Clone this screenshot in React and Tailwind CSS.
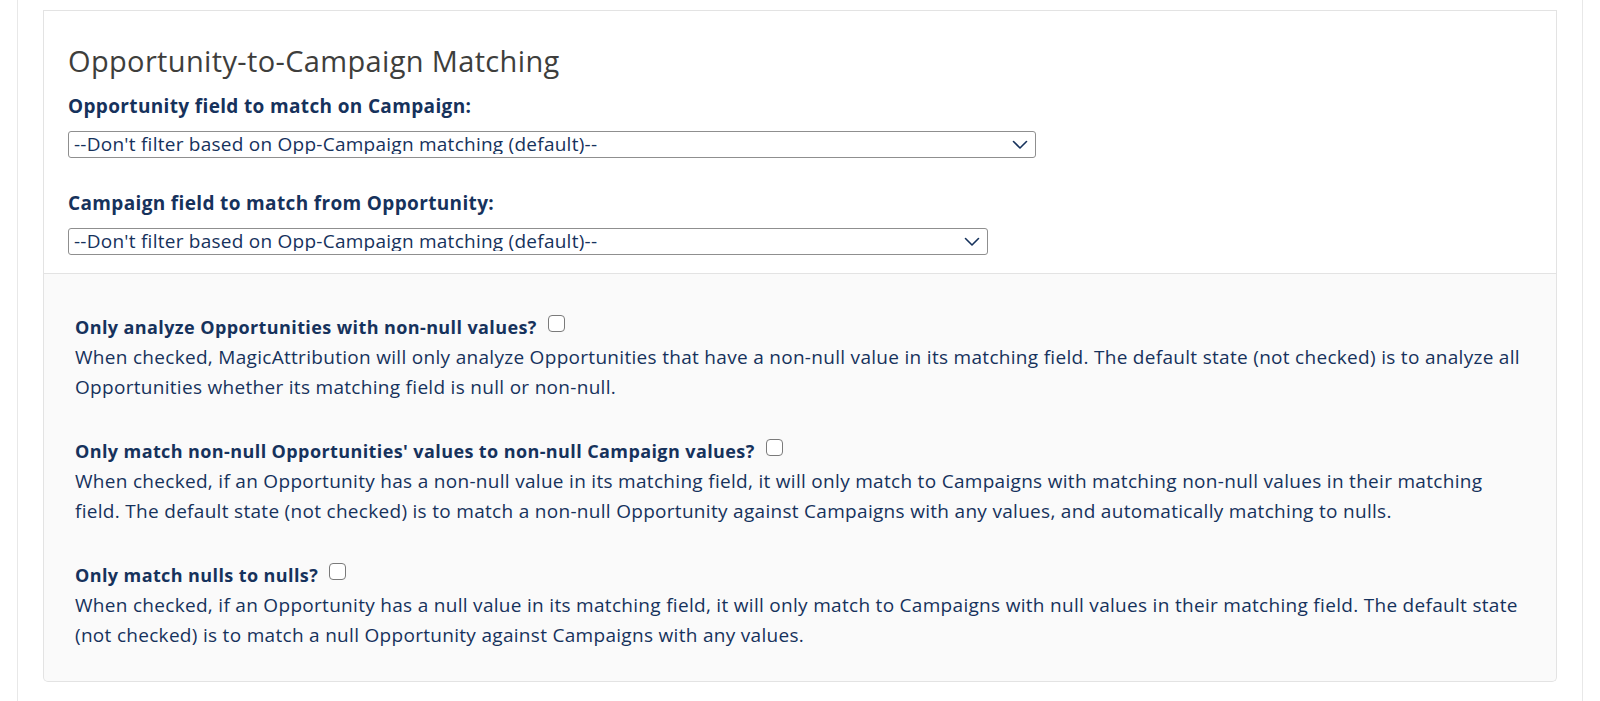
const NAVY = "text-[#16325c]";

function Select({ width }) {
  return (
    <div className={`relative ${width} h-[27px]`}>
      <select className="appearance-none w-full h-full border border-[#8f8f8f] rounded-[3px] bg-white pl-[5px] pr-8 text-[19px] tracking-[0.25px] text-[#16325c] leading-none outline-none">
        <option>--Don't filter based on Opp-Campaign matching (default)--</option>
      </select>
      <svg width="16" height="10" viewBox="0 0 16 10" className="absolute right-[8px] top-[9px] pointer-events-none">
        <polyline points="1.5,1.5 8,8 14.5,1.5" fill="none" stroke="#16325c" strokeWidth="1.6" strokeLinecap="round" strokeLinejoin="round" />
      </svg>
    </div>
  );
}

function Option({ title, children }) {
  return (
    <div>
      <div className="flex items-center gap-[11px]">
        <span className="font-bold text-[18px] tracking-[0.4px] leading-[30px]">{title}</span>
        <span className="w-[17px] h-[17px] border border-[#7a7a7a] rounded-[4px] bg-white -mt-[8px]" />
      </div>
      <p className="text-[19px] tracking-[0.3px] leading-[30px]">{children}</p>
    </div>
  );
}

export default function App() {
  return (
    <div className="min-h-[701px] bg-white" style={{ fontFamily: "'Open Sans', Lato, sans-serif" }}>
      <div className="mx-[17px] min-h-[701px] border-x border-[#e8e8e8] pt-[10px] pl-[25px] pr-[25px]">
        <div className="border border-[#e3e3e3] bg-white pl-[24px] pt-[32px] pb-[18px]">
          <h2 className="text-[29px] tracking-[0.35px] leading-[36px] text-[#3e3e3c] mb-[15px]">Opportunity-to-Campaign Matching</h2>
          <div className={`font-bold text-[19px] tracking-[0.35px] leading-[24px] ${NAVY} mb-[13px]`}>Opportunity field to match on Campaign:</div>
          <Select width="w-[968px]" />
          <div className={`font-bold text-[19px] tracking-[0.35px] leading-[24px] ${NAVY} mt-[33px] mb-[13px]`}>Campaign field to match from Opportunity:</div>
          <Select width="w-[920px]" />
        </div>
        <div className={`border border-[#e3e3e3] border-t-0 rounded-b-[5px] bg-[#fafafa] pl-[31px] pr-[30px] pt-[38px] pb-[31px] flex flex-col gap-[34px] ${NAVY}`}>
          <Option title="Only analyze Opportunities with non-null values?">
            When checked, MagicAttribution will only analyze Opportunities that have a non-null value in its matching field. The default state (not checked) is to analyze all Opportunities whether its matching field is null or non-null.
          </Option>
          <Option title="Only match non-null Opportunities' values to non-null Campaign values?">
            When checked, if an Opportunity has a non-null value in its matching field, it will only match to Campaigns with matching non-null values in their matching field. The default state (not checked) is to match a non-null Opportunity against Campaigns with any values, and automatically matching to nulls.
          </Option>
          <Option title="Only match nulls to nulls?">
            When checked, if an Opportunity has a null value in its matching field, it will only match to Campaigns with null values in their matching field. The default state (not checked) is to match a null Opportunity against Campaigns with any values.
          </Option>
        </div>
      </div>
    </div>
  );
}
